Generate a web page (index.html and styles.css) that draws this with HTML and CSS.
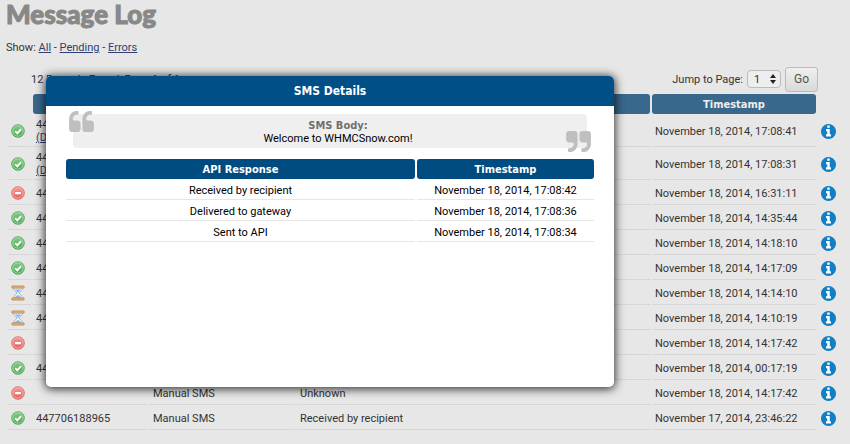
FILE: index.html
```html
<!DOCTYPE html>
<html lang="en">
<head>
  <meta charset="utf-8">
  <title>Message Log</title>
  <link rel="stylesheet" href="styles.css">
</head>
<body>
  <svg class="sprite" width="0" height="0" aria-hidden="true">
    <defs>
      <linearGradient id="green" x1="0" y1="0" x2="0" y2="1">
        <stop offset="0" stop-color="#86cf8b"/>
        <stop offset="1" stop-color="#45a64c"/>
      </linearGradient>
      <linearGradient id="red" x1="0" y1="0" x2="0" y2="1">
        <stop offset="0" stop-color="#f79a96"/>
        <stop offset="1" stop-color="#e25c5a"/>
      </linearGradient>
    </defs>
    <symbol id="ok" viewBox="0 0 14 14">
      <circle cx="7" cy="7" r="6.3" fill="url(#green)" stroke="#4f9d55" stroke-width=".8"/>
      <circle cx="7" cy="7" r="5.2" fill="none" stroke="#a9dfac" stroke-width=".8"/>
      <path d="M4.2 7.2l2.1 2.1 3.7-4.2" fill="none" stroke="#fff" stroke-width="1.9"/>
    </symbol>
    <symbol id="error" viewBox="0 0 14 14">
      <circle cx="7" cy="7" r="6.3" fill="url(#red)" stroke="#d9605e" stroke-width=".8"/>
      <circle cx="7" cy="7" r="5.2" fill="none" stroke="#f9b9b6" stroke-width=".8"/>
      <rect x="4" y="6" width="6" height="2.2" rx=".4" fill="#fff"/>
    </symbol>
    <symbol id="pending" viewBox="0 0 14 16">
      <path d="M2.2 2.5c0 3.400 3.600 4 3.600 5.500s-3.600 2.100-3.600 5.500h9.600c0-3.400-3.600-4-3.600-5.500s3.600-2.100 3.600-5.500z" fill="#e6f0fb" stroke="#98b0d0" stroke-width=".8"/>
      <path d="M4.200 4.600h5.600C9.200 6 7.600 6.500 7 8 6.400 6.500 4.800 6 4.200 4.600zM3.200 13.200C4 11.400 6.200 11.200 7 9.800c.8 1.400 3 1.600 3.800 3.400z" fill="#8db8ea"/>
      <rect x=".6" y=".8" width="12.800" height="2.500" rx="1.200" fill="#dba970" stroke="#b98350" stroke-width=".5"/>
      <rect x=".6" y="12.700" width="12.800" height="2.500" rx="1.200" fill="#dba970" stroke="#b98350" stroke-width=".5"/>
    </symbol>
    <symbol id="info" viewBox="0 128 1536 1536">
      <circle cx="768" cy="896" r="720" fill="#fff"/>
      <path fill="#127fc4" d="M1024 1376v-160q0-14-9-23t-23-9h-96v-512q0-14-9-23t-23-9h-320q-14 0-23 9t-9 23v160q0 14 9 23t23 9h96v320h-96q-14 0-23 9t-9 23v160q0 14 9 23t23 9h448q14 0 23-9t9-23zm-128-896v-160q0-14-9-23t-23-9h-192q-14 0-23 9t-9 23v160q0 14 9 23t23 9h192q14 0 23-9t9-23zm640 416q0 209-103 385.500t-279.500 279.500-385.500 103-385.500-103-279.500-279.500-103-385.500 103-385.500 279.500-279.500 385.500-103 385.500 103 279.500 279.500 103 385.500z"/>
    </symbol>
  </svg>

  <div class="page">
    <h1>Message Log</h1>
    <p class="filter">Show: <a href="#">All</a> - <a href="#">Pending</a> - <a href="#">Errors</a></p>

    <form class="pager">
      <span class="records">12 Records Found, Page 1 of 1</span>
      <label for="jump">Jump to Page:</label>
      <span class="select">
        <select id="jump"><option>1</option></select>
        <svg viewBox="0 0 6 10" width="6" height="10"><path d="M3 0l3 4H0zM3 10l3-4H0z" fill="#222"/></svg>
      </span>
      <button type="submit">Go</button>
    </form>

    <table class="log">
      <colgroup>
        <col class="col-icon">
        <col class="col-number">
        <col class="col-type">
        <col>
        <col class="col-time">
        <col class="col-info">
      </colgroup>
      <thead>
        <tr><td></td><th>To</th><th>Type</th><th>Status</th><th>Timestamp</th><td></td></tr>
      </thead>
      <tbody>
        <tr class="tall"><td><svg class="status"><use href="#ok"/></svg></td><td>447706188965<br><a href="#">(Details)</a></td><td>Manual SMS</td><td>Received by recipient</td><td>November 18, 2014, 17:08:41</td><td><a href="#" aria-label="Details"><svg class="info"><use href="#info"/></svg></a></td></tr>
        <tr class="tall"><td><svg class="status"><use href="#ok"/></svg></td><td>447706188965<br><a href="#">(Details)</a></td><td>Manual SMS</td><td>Received by recipient</td><td>November 18, 2014, 17:08:31</td><td><a href="#" aria-label="Details"><svg class="info"><use href="#info"/></svg></a></td></tr>
        <tr><td><svg class="status"><use href="#error"/></svg></td><td>447706188965</td><td>Manual SMS</td><td>Unknown</td><td>November 18, 2014, 16:31:11</td><td><a href="#" aria-label="Details"><svg class="info"><use href="#info"/></svg></a></td></tr>
        <tr><td><svg class="status"><use href="#ok"/></svg></td><td>447706188965</td><td>Manual SMS</td><td>Received by recipient</td><td>November 18, 2014, 14:35:44</td><td><a href="#" aria-label="Details"><svg class="info"><use href="#info"/></svg></a></td></tr>
        <tr><td><svg class="status"><use href="#ok"/></svg></td><td>447706188965</td><td>Manual SMS</td><td>Received by recipient</td><td>November 18, 2014, 14:18:10</td><td><a href="#" aria-label="Details"><svg class="info"><use href="#info"/></svg></a></td></tr>
        <tr><td><svg class="status"><use href="#ok"/></svg></td><td>447706188965</td><td>Manual SMS</td><td>Received by recipient</td><td>November 18, 2014, 14:17:09</td><td><a href="#" aria-label="Details"><svg class="info"><use href="#info"/></svg></a></td></tr>
        <tr><td><svg class="status pending"><use href="#pending"/></svg></td><td>447706188965</td><td>Manual SMS</td><td>Pending</td><td>November 18, 2014, 14:14:10</td><td><a href="#" aria-label="Details"><svg class="info"><use href="#info"/></svg></a></td></tr>
        <tr><td><svg class="status pending"><use href="#pending"/></svg></td><td>447706188965</td><td>Manual SMS</td><td>Pending</td><td>November 18, 2014, 14:10:19</td><td><a href="#" aria-label="Details"><svg class="info"><use href="#info"/></svg></a></td></tr>
        <tr><td><svg class="status"><use href="#error"/></svg></td><td></td><td>Manual SMS</td><td>Unknown</td><td>November 18, 2014, 14:17:42</td><td><a href="#" aria-label="Details"><svg class="info"><use href="#info"/></svg></a></td></tr>
        <tr><td><svg class="status"><use href="#ok"/></svg></td><td>447706188965</td><td>Manual SMS</td><td>Received by recipient</td><td>November 18, 2014, 00:17:19</td><td><a href="#" aria-label="Details"><svg class="info"><use href="#info"/></svg></a></td></tr>
        <tr><td><svg class="status"><use href="#error"/></svg></td><td></td><td>Manual SMS</td><td>Unknown</td><td>November 18, 2014, 14:17:42</td><td><a href="#" aria-label="Details"><svg class="info"><use href="#info"/></svg></a></td></tr>
        <tr><td><svg class="status"><use href="#ok"/></svg></td><td>447706188965</td><td>Manual SMS</td><td>Received by recipient</td><td>November 17, 2014, 23:46:22</td><td><a href="#" aria-label="Details"><svg class="info"><use href="#info"/></svg></a></td></tr>
      </tbody>
    </table>
  </div>

  <div class="modal" role="dialog" aria-labelledby="modal-title">
    <h2 id="modal-title">SMS Details</h2>
    <div class="modal-body">
      <div class="sms">
        <svg class="quote quote-left" viewBox="0 0 1664 1408"><path id="q" d="M768 832v384q0 80-56 136t-136 56h-384q-80 0-136-56t-56-136v-704q0-104 40.500-198.500t109.500-163.500 163.500-109.500 198.500-40.500h64q26 0 45 19t19 45v128q0 26-19 45t-45 19h-64q-106 0-181 75t-75 181v32q0 40 28 68t68 28h224q80 0 136 56t56 136z"/><use href="#q" x="896"/></svg>
        <strong>SMS Body:</strong>
        <span>Welcome to WHMCSnow.com!</span>
        <svg class="quote quote-right" viewBox="0 128 1664 1408"><path id="r" d="M768 320v704q0 104-40.500 198.500t-109.500 163.500-163.500 109.500-198.500 40.500h-64q-26 0-45-19t-19-45v-128q0-26 19-45t45-19h64q106 0 181-75t75-181v-32q0-40-28-68t-68-28h-224q-80 0-136-56t-56-136v-384q0-80 56-136t136-56h384q80 0 136 56t56 136z"/><use href="#r" x="896"/></svg>
      </div>
      <table class="responses">
        <thead>
          <tr><th>API Response</th><th>Timestamp</th></tr>
        </thead>
        <tbody>
          <tr><td>Received by recipient</td><td>November 18, 2014, 17:08:42</td></tr>
          <tr><td>Delivered to gateway</td><td>November 18, 2014, 17:08:36</td></tr>
          <tr><td>Sent to API</td><td>November 18, 2014, 17:08:34</td></tr>
        </tbody>
      </table>
    </div>
  </div>
</body>
</html>
```

FILE: styles.css
```css
* {
  box-sizing: border-box;
}
body {
  margin: 0;
  background: #e7e7e7;
  color: #333;
  font-family: Roboto, "Liberation Sans", sans-serif;
  font-size: 11px;
  line-height: 13px;
}
a {
  color: #2f3f73;
}
svg {
  display: block;
}
.sprite {
  position: absolute;
}
.page {
  padding: 0 6px;
}
h1 {
  margin: 0;
  color: #888;
  font-family: Lato, sans-serif;
  font-size: 26px;
  font-weight: 900;
  line-height: 28px;
  -webkit-text-stroke: 1px #888;
}
.filter {
  margin: 13px 0 12px;
}
.pager {
  display: flex;
  align-items: center;
  gap: 4px;
  height: 26px;
  margin: 0 26px 0 25px;
}
.records {
  margin-right: auto;
}
.select {
  position: relative;
}
.select select {
  appearance: none;
  display: block;
  width: 34px;
  height: 18px;
  padding: 0 6px;
  border: 1px solid #bbb;
  border-radius: 4px;
  background: #eee;
  color: #333;
  font: inherit;
}
.select svg {
  position: absolute;
  top: 4px;
  right: 5px;
  pointer-events: none;
}
.pager button {
  width: 33px;
  height: 25px;
  padding: 0;
  border: 1px solid #bbb;
  border-radius: 3px;
  background: linear-gradient(#efefef, #d9d9d9);
  color: #555;
  font: inherit;
  font-size: 12px;
}

table {
  width: 100%;
  table-layout: fixed;
  border-collapse: separate;
  border-spacing: 2px;
}
th {
  padding: 0;
  border-radius: 3px;
  color: #fff;
  font-family: "DejaVu Sans Condensed", "DejaVu Sans", sans-serif;
  font-size: 11px;
  font-weight: bold;
}
td {
  padding: 0;
}

.log th {
  height: 20px;
  background: #38688c;
  color: #eee;
}
.log tbody td {
  height: 23px;
  padding: 0 3px;
  border-bottom: 1px solid #d6d6d6;
}
.log .tall td {
  height: 31px;
}
.log tbody td:last-child {
  border-bottom: 0;
}
.col-icon {
  width: 23px;
}
.col-number {
  width: 115px;
}
.col-type {
  width: 145px;
}
.col-time {
  width: 164px;
}
.col-info {
  width: 24px;
}
.status {
  width: 14px;
  height: 14px;
}
.pending {
  height: 16px;
}
.info {
  width: 15px;
  height: 15px;
}

.modal {
  position: absolute;
  top: 76px;
  left: 46px;
  width: 568px;
  min-height: 311px;
  border-radius: 5px;
  background: #fff;
  box-shadow: 0 1px 10px 1px rgba(0, 0, 0, 0.8);
  color: #000;
}
.modal h2 {
  margin: 0;
  border-radius: 5px 5px 0 0;
  background: #004f87;
  color: #fff;
  font-family: "DejaVu Sans Condensed", "DejaVu Sans", sans-serif;
  font-size: 12px;
  line-height: 30px;
  text-align: center;
}
.modal-body {
  padding: 8px 18px;
}
.sms {
  position: relative;
  display: flex;
  flex-direction: column;
  align-items: center;
  margin: 0 9px 9px;
  padding: 5px 0 3px 16px;
  border-radius: 4px;
  background: #efefef;
}
.sms strong {
  color: #6f6f6f;
  font-family: "DejaVu Sans Condensed", "DejaVu Sans", sans-serif;
}
.quote {
  position: absolute;
  width: 25px;
  height: 21px;
  fill: #bfbfbf;
}
.quote-left {
  top: -3px;
  left: -4px;
}
.quote-right {
  right: -4px;
  bottom: -4px;
}
.responses th {
  height: 20px;
  background: #004b80;
}
.responses th:last-child {
  width: 177px;
}
.responses td {
  height: 19px;
  border-bottom: 1px solid #e6e6e6;
  text-align: center;
}
```
